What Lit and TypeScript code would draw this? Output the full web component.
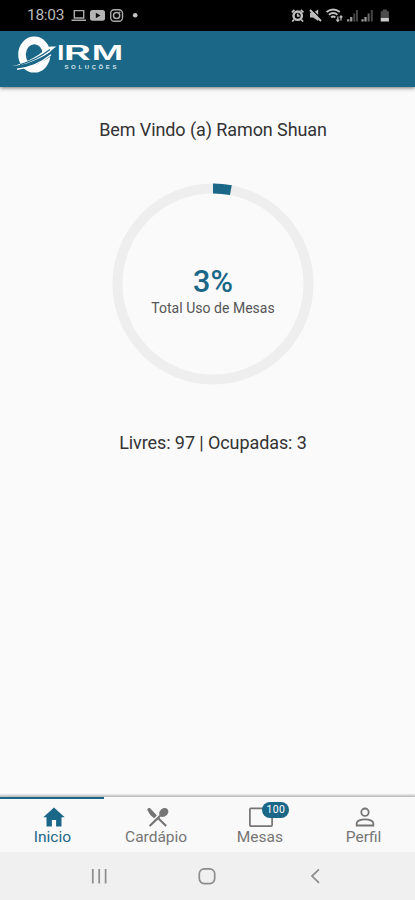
import { LitElement, html, svg, css } from "lit";
import { customElement, property } from "lit/decorators.js";

@customElement("status-bar")
class StatusBar extends LitElement {
  static styles = css`
    :host { display: flex; height: 31px; background: #000; color: #b9b9b9; align-items: center; justify-content: space-between; }
    .clock { font: 15.5px/31px Roboto, sans-serif; letter-spacing: -0.3px; margin-left: 27px; width: 38px; white-space: nowrap; }
    .left { display: flex; }
    svg { display: block; }
  `;
  render() {
    return html`
      <div class="left">
        <span class="clock">18:03</span>
        <svg width="85" height="31" viewBox="65 0 85 31" fill="none" stroke="#aaa">
          <path d="M74.300 10.600h9.400v7.400h-9.400zM71.500 20.300h14.500" stroke-width="1.400" />
          <rect x="90" y="10" width="15" height="10.800" rx="2.500" fill="#b4b4b4" stroke="none" />
          <path d="M95.800 12.700v5.600l4.700-2.800z" fill="#111" stroke="none" />
          <rect x="110.700" y="9.700" width="11.800" height="11.600" rx="3.500" stroke-width="1.400" />
          <circle cx="116.600" cy="15.500" r="3.100" stroke-width="1.500" />
          <circle cx="119.700" cy="12.300" r=".8" fill="#aaa" stroke="none" />
          <circle cx="135.200" cy="15.300" r="2.300" fill="#c4c4c4" stroke="none" />
        </svg>
      </div>
      <svg width="127" height="31" viewBox="288 0 127 31" fill="none" stroke="#c2c2c2">
        <circle cx="297.700" cy="15.700" r="4.200" stroke-width="2.400" />
        <path d="M297.700 13.500v2.500h2M291.800 12.400l2.700-2.400M303.500 12.400l-2.700-2.400M294 19.600l-1.800 1.900M301.300 19.600l1.800 1.900" stroke-width="1.700" />
        <path d="M310 12.700h3.200l5-3.200v11.500l-5.200-3.600H310z" fill="#bbb" stroke="none" />
        <path d="M311.500 9.500l10 9.500" stroke="#000" stroke-width="1.300" />
        <path d="M310 10l11 11" stroke-width="2" />
        <path d="M326.500 12c4.200-3.200 9.300-3.200 13.300 0M328.900 14.700c3-2.200 5.800-2.200 8.500 0M331.100 17.400c1.500-1.200 2.800-1.200 4.200 0" stroke-width="2" />
        <path d="M337.800 21.300v-4.700m-1.500 3.100l1.500 1.600 1.500-1.600M341 20.500v-4.800m-1.400 1.700l1.400-1.600 1.400 1.600" stroke-width="1.200" />
        <path d="M348.200 21.500v-2.300M351.200 21.500v-4.500M362.500 21.500v-2.300M365.500 21.500v-4.500" stroke="#999" stroke-width="2.300" />
        <path d="M354.300 21.500v-8M357 21.500V10M371.800 21.500V10" stroke="#444" stroke-width="2" />
        <path d="M368.600 21.500v-8" stroke="#666" stroke-width="2" />
        <path d="M380.700 18v-6.800h2V9.500h4.200v1.700h2V18z" fill="#4c4c4c" stroke="none" />
        <rect x="380.700" y="18" width="8.200" height="3.500" fill="#ccc" stroke="none" />
      </svg>
    `;
  }
}

@customElement("brand-header")
class BrandHeader extends LitElement {
  static styles = css`
    :host { display: block; height: 56px; background: #1b6787; box-shadow: 0 1px 4px rgba(0, 0, 0, 0.55); position: relative; }
    svg { display: block; }
    .name { font: 600 20px Inter, sans-serif; }
    .sub { font: 700 6px "Liberation Sans", sans-serif; }
  `;
  render() {
    return html`
      <svg width="140" height="56" viewBox="0 31 140 56" fill="#fff">
        <ellipse cx="34.300" cy="54.600" rx="12.300" ry="14.200" fill="none" stroke="#fff" stroke-width="7.600" />
        <path d="M14 67c13-1 26-5 40-15" fill="none" stroke="#1b6787" stroke-width="4" />
        <path d="M11 66.300C27 63 38 56 45 49.500c4-3.500 7-3 11.500-2.700-3 .8-4 3.300-6.500 5C38 60.500 25 65 11 66.300z" />
        <path d="M20 64.700C32 61 41 56.500 50 49.500" fill="none" stroke="#1b6787" stroke-width="1.200" />
        <path d="M17 69.300c13-1.300 24-6.300 34-14.500" fill="none" stroke="#fff" stroke-width="1.400" />
        <g class="name">
          <text x="57" y="60.300" textLength="7.600" lengthAdjust="spacingAndGlyphs">I</text>
          <text x="63.500" y="60.300" textLength="27.500" lengthAdjust="spacingAndGlyphs">R</text>
          <text x="91.800" y="60.300" textLength="31.500" lengthAdjust="spacingAndGlyphs">M</text>
        </g>
        <text class="sub" x="64.500" y="69" textLength="52" fill="#d5e5eb">SOLUÇÕES</text>
      </svg>
    `;
  }
}

@customElement("usage-ring")
class UsageRing extends LitElement {
  @property({ type: Number }) percent = 0;
  static styles = css`
    :host { display: grid; width: 202px; height: 202px; }
    svg, .label { grid-area: 1 / 1; }
    .label { display: flex; flex-direction: column; align-items: center; padding-top: 81px; font-family: Roboto, sans-serif; }
    .value { font-size: 30.5px; line-height: 35px; font-weight: 500; color: #1b6787; }
    .caption { font-size: 14px; line-height: 18px; letter-spacing: 0.03px; color: #555; white-space: nowrap; }
  `;
  render() {
    return html`
      <svg width="202" height="202" fill="none" stroke-width="10">
        <circle cx="101" cy="101" r="95.500" stroke="#eee" />
        <circle cx="101" cy="101" r="95.500" stroke="#1b6787" pathLength="100"
          stroke-dasharray="${this.percent} 100" transform="rotate(-90 101 101)" />
      </svg>
      <div class="label">
        <span class="value">${this.percent}%</span>
        <span class="caption">Total Uso de Mesas</span>
      </div>
    `;
  }
}

const icons = {
  home: svg`<path d="M12 2.500L1.300 12.300h3.200V21.500h5.400v-6.400h4.200v6.400h5.400v-9.200h3.200z" />`,
  food: svg`<path d="M8.100 13.340l2.830-2.830L4.200 3.200C2.200 2.300 .8 3.600 1.600 5.600L4.300 9.900l3.800 3.440zM14.880 11.530c1.530.9 3.880.5 5.670-1.180 2.110-1.910 2.480-4.850.81-6.420-1.460-1.460-4.500-1.300-6.420.71-1.590 1.590-2.190 3.740-1.480 5.270L2.900 20.370l1.500 1.500L12 14.510l7.400 7.360 1.500-1.500L13.450 13z" />`,
  square: svg`<rect x=".9" y="3.300" width="22.200" height="17.800" rx="1" fill="none" stroke="currentColor" stroke-width="1.700" />`,
  person: svg`<g fill="none" stroke="currentColor" stroke-width="1.800"><circle cx="12" cy="7.200" r="3.700" /><path d="M3.700 20.500v-2.300c0-2.300 4-3.900 8.300-3.900s8.300 1.600 8.300 3.900v2.300z" /></g>`,
};

@customElement("tab-bar")
class TabBar extends LitElement {
  static styles = css`
    :host { display: grid; grid-template-columns: repeat(4, 1fr); height: 55px; background: #f9f9f9; font-family: Roboto, sans-serif; color: #757575; box-shadow: 0 -1px 2px 1px rgba(0, 0, 0, 0.25); }
    .tab { display: flex; flex-direction: column; align-items: center; border-top: 2px solid transparent; padding-top: 6px; box-sizing: border-box; }
    .active { color: #1b6787; border-color: #1b6787; }
    .icon { position: relative; height: 24px; padding-left: 4px; }
    svg { display: block; fill: currentColor; }
    .text { font-size: 15.500px; line-height: 18px; padding-left: 1px; margin-top: -1px; }
    .badge { position: absolute; left: 17px; top: -3px; width: 27px; height: 16px; border-radius: 8px; background: #1b6787; color: #fff; font-size: 10.500px; line-height: 16px; text-align: center; letter-spacing: 0.300px; }
  `;
  tabs = [
    { label: "Inicio", icon: icons.home, badge: "", active: true },
    { label: "Cardápio", icon: icons.food, badge: "", active: false },
    { label: "Mesas", icon: icons.square, badge: "100", active: false },
    { label: "Perfil", icon: icons.person, badge: "", active: false },
  ];
  render() {
    return this.tabs.map((t) => html`
      <div class="tab ${t.active ? "active" : ""}">
        <div class="icon">
          <svg width="24" height="24" viewBox="0 0 24 24">${t.icon}</svg>
          ${t.badge ? html`<span class="badge">${t.badge}</span>` : ""}
        </div>
        <span class="text">${t.label}</span>
      </div>
    `);
  }
}

@customElement("app-root")
class AppRoot extends LitElement {
  static styles = css`
    :host { display: flex; flex-direction: column; height: 900px; width: 415px; background: #fafafa; overflow: hidden; font-family: Roboto, sans-serif; color: #333; }
    main { flex: 1; display: flex; flex-direction: column; align-items: center; padding: 31px 0 0 11px; }
    .line { font-size: 18px; line-height: 24px; letter-spacing: -0.09px; white-space: nowrap; }
    usage-ring { margin: 41px 0 46px; }
    .system { height: 48px; background: #f0f0f0; }
    .system svg { display: block; }
  `;
  render() {
    return html`
      <status-bar></status-bar>
      <brand-header></brand-header>
      <main>
        <div class="line">Bem Vindo (a) Ramon Shuan</div>
        <usage-ring percent="3"></usage-ring>
        <div class="line">Livres: 97 | Ocupadas: 3</div>
      </main>
      <tab-bar></tab-bar>
      <div class="system">
        <svg width="415" height="48" viewBox="0 852 415 48" fill="none" stroke="#8c8c8c" stroke-width="1.700">
          <path d="M92.800 869v14.500M99.200 869v14.500M105.600 869v14.500" />
          <rect x="199.300" y="868.800" width="15.400" height="14.800" rx="5" />
          <path d="M319 869.300l-7 6.800 7 6.800" />
        </svg>
      </div>
    `;
  }
}
